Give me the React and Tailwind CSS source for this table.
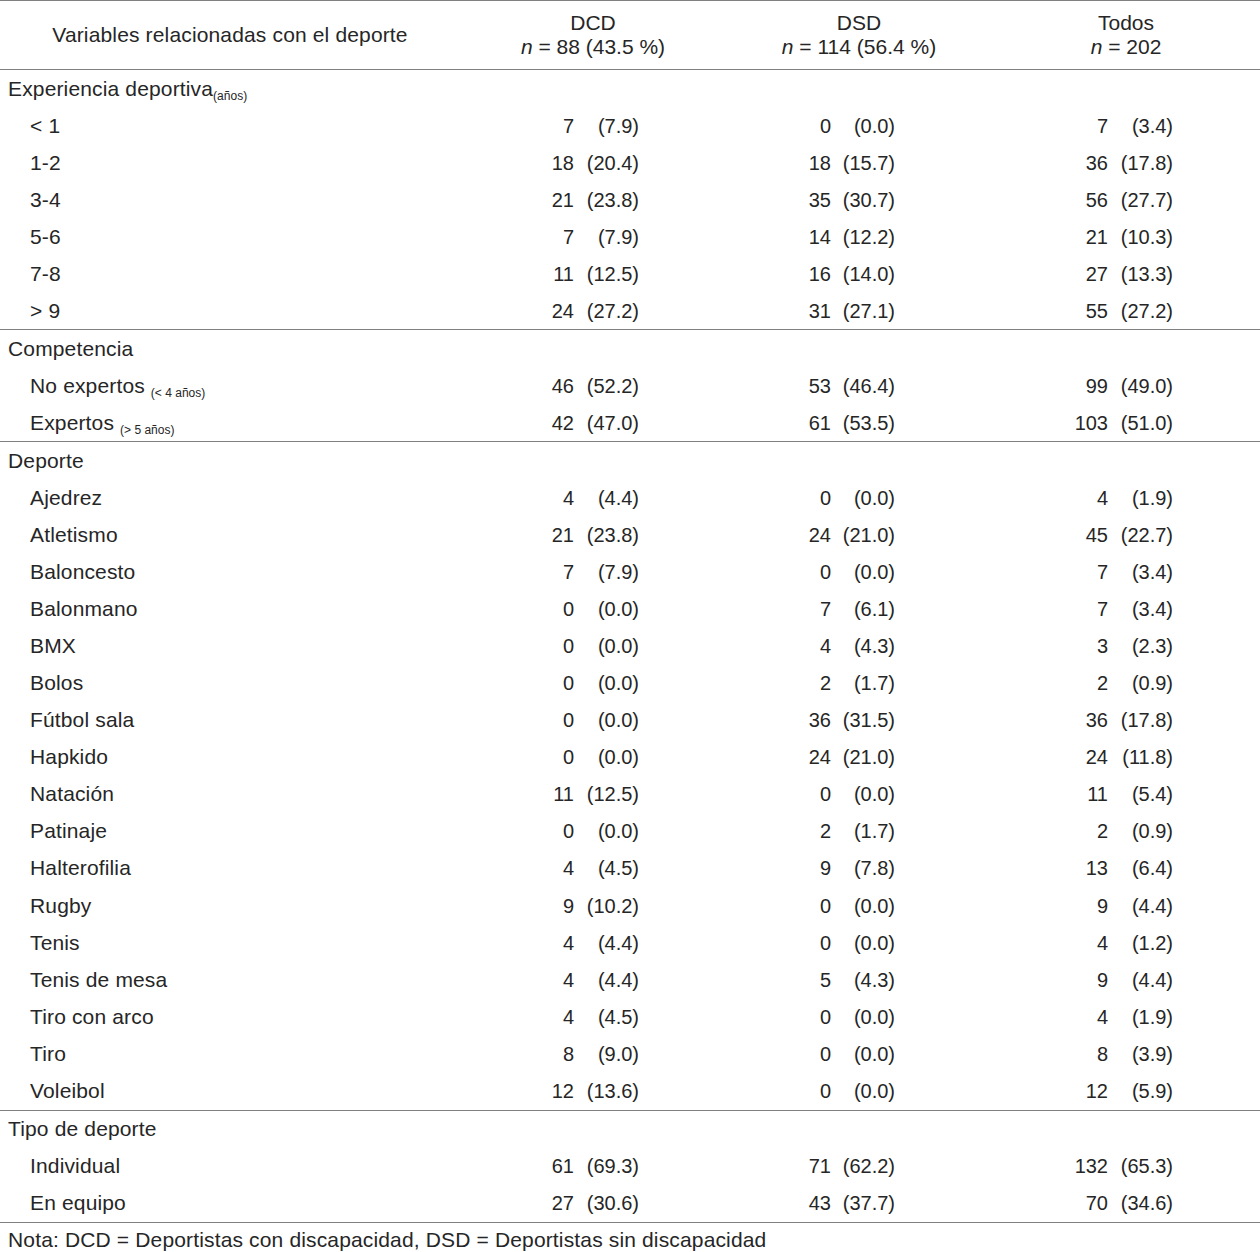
import React from "react";

const Sub = ({ children }) => (
  <sub className="text-[12px] tracking-normal relative top-[4px]">{children}</sub>
);

const sections = [
  {
    title: (
      <>
        Experiencia deportiva
        <Sub>(años)</Sub>
      </>
    ),
    rows: [
      ["< 1", "7", "(7.9)", "0", "(0.0)", "7", "(3.4)"],
      ["1-2", "18", "(20.4)", "18", "(15.7)", "36", "(17.8)"],
      ["3-4", "21", "(23.8)", "35", "(30.7)", "56", "(27.7)"],
      ["5-6", "7", "(7.9)", "14", "(12.2)", "21", "(10.3)"],
      ["7-8", "11", "(12.5)", "16", "(14.0)", "27", "(13.3)"],
      ["> 9", "24", "(27.2)", "31", "(27.1)", "55", "(27.2)"],
    ],
  },
  {
    title: "Competencia",
    rows: [
      [
        <>
          No expertos <Sub>(&lt; 4 años)</Sub>
        </>,
        "46", "(52.2)", "53", "(46.4)", "99", "(49.0)",
      ],
      [
        <>
          Expertos <Sub>(&gt; 5 años)</Sub>
        </>,
        "42", "(47.0)", "61", "(53.5)", "103", "(51.0)",
      ],
    ],
  },
  {
    title: "Deporte",
    tall: true,
    rows: [
      ["Ajedrez", "4", "(4.4)", "0", "(0.0)", "4", "(1.9)"],
      ["Atletismo", "21", "(23.8)", "24", "(21.0)", "45", "(22.7)"],
      ["Baloncesto", "7", "(7.9)", "0", "(0.0)", "7", "(3.4)"],
      ["Balonmano", "0", "(0.0)", "7", "(6.1)", "7", "(3.4)"],
      ["BMX", "0", "(0.0)", "4", "(4.3)", "3", "(2.3)"],
      ["Bolos", "0", "(0.0)", "2", "(1.7)", "2", "(0.9)"],
      ["Fútbol sala", "0", "(0.0)", "36", "(31.5)", "36", "(17.8)"],
      ["Hapkido", "0", "(0.0)", "24", "(21.0)", "24", "(11.8)"],
      ["Natación", "11", "(12.5)", "0", "(0.0)", "11", "(5.4)"],
      ["Patinaje", "0", "(0.0)", "2", "(1.7)", "2", "(0.9)"],
      ["Halterofilia", "4", "(4.5)", "9", "(7.8)", "13", "(6.4)"],
      ["Rugby", "9", "(10.2)", "0", "(0.0)", "9", "(4.4)"],
      ["Tenis", "4", "(4.4)", "0", "(0.0)", "4", "(1.2)"],
      ["Tenis de mesa", "4", "(4.4)", "5", "(4.3)", "9", "(4.4)"],
      ["Tiro con arco", "4", "(4.5)", "0", "(0.0)", "4", "(1.9)"],
      ["Tiro", "8", "(9.0)", "0", "(0.0)", "8", "(3.9)"],
      ["Voleibol", "12", "(13.6)", "0", "(0.0)", "12", "(5.9)"],
    ],
  },
  {
    title: "Tipo de deporte",
    rows: [
      ["Individual", "61", "(69.3)", "71", "(62.2)", "132", "(65.3)"],
      ["En equipo", "27", "(30.6)", "43", "(37.7)", "70", "(34.6)"],
    ],
  },
];

const gridCols =
  "grid grid-cols-[520px_54px_65px_192px_64px_213px_65px_87px] items-center";

function DataRow({ r, tall }) {
  return (
    <div className={`${gridCols} ${tall ? "h-[37.1px]" : "h-[37px]"}`}>
      <div className="pl-[30px] whitespace-nowrap text-[21px] tracking-[0.15px]">{r[0]}</div>
      <div className="text-right">{r[1]}</div>
      <div className="text-right">{r[2]}</div>
      <div className="text-right">{r[3]}</div>
      <div className="text-right">{r[4]}</div>
      <div className="text-right">{r[5]}</div>
      <div className="text-right">{r[6]}</div>
      <div />
    </div>
  );
}

export default function App() {
  return (
    <div
      className="w-[1260px] h-[1252px] bg-white text-[#262626] text-[20px] leading-[24px] overflow-hidden"
      style={{ fontFamily: '"Liberation Sans", Arial, sans-serif' }}
    >
      <div className="border-t border-[#808080]" />
      <div className="grid grid-cols-[460px_266px_266px_268px] items-center h-[69px] border-b border-[#808080] text-[21px]">
        <div className="text-center tracking-[0.15px]">Variables relacionadas con el deporte</div>
        <div className="text-center">
          <div>DCD</div>
          <div>
            <i>n</i> = 88 (43.5 %)
          </div>
        </div>
        <div className="text-center">
          <div>DSD</div>
          <div>
            <i>n</i> = 114 (56.4 %)
          </div>
        </div>
        <div className="text-center">
          <div>Todos</div>
          <div>
            <i>n</i> = 202
          </div>
        </div>
      </div>
      {sections.map((s, i) => (
        <div key={i} className="border-b border-[#808080]">
          <div className="h-[37px] flex items-center pl-[8px] whitespace-nowrap text-[21px] tracking-[0.15px]">
            <span>{s.title}</span>
          </div>
          {s.rows.map((r, j) => (
            <DataRow key={j} r={r} tall={s.tall} />
          ))}
        </div>
      ))}
      <div className="h-[30px] pt-[5px] pl-[8px] text-[21px] tracking-[0.15px] whitespace-nowrap">
        Nota: DCD = Deportistas con discapacidad, DSD = Deportistas sin discapacidad
      </div>
    </div>
  );
}
